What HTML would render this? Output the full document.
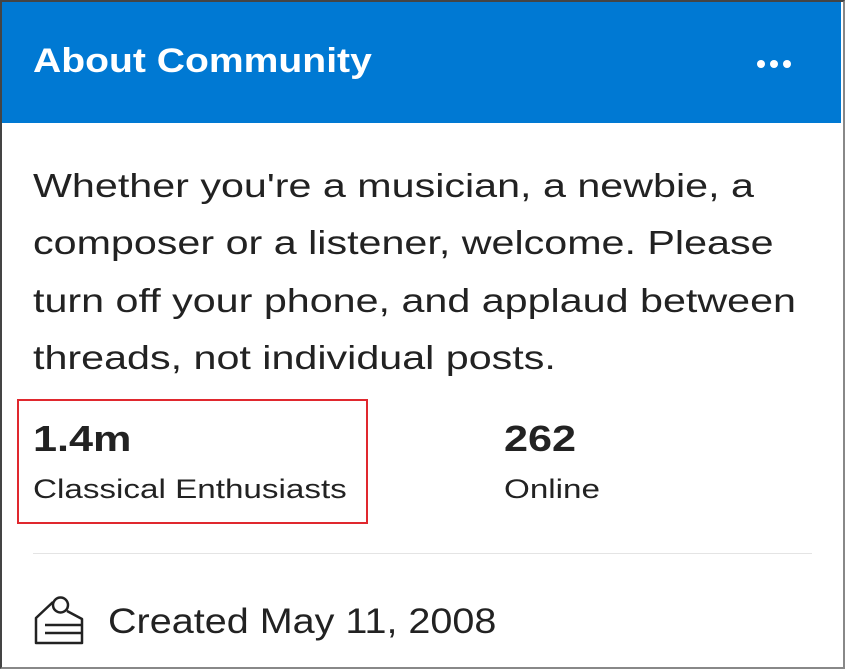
<!DOCTYPE html>
<html><head><style>
body{margin:0;width:845px;height:669px;background:#fff;font-family:"Liberation Sans",sans-serif;overflow:hidden}
.frame{position:absolute;left:0;top:0;width:841px;height:665px;border:2px solid #444;border-right-color:#888;border-bottom-color:#888}
.hdr{position:absolute;left:2px;top:2px;width:839px;height:121px;background:#0079d3}
.s{position:absolute;transform-origin:0 0;white-space:nowrap}
.t{left:33px;top:42px;color:#fff;font-weight:bold;font-size:34px;transform:scaleX(1.15)}
.dots{position:absolute;left:757px;top:55px}
.dots i{display:inline-block;width:8px;height:8px;border-radius:50%;background:#fff;margin-right:5px}
.desc{left:33px;top:157px;font-size:33px;line-height:57.3px;color:#222;transform:scaleX(1.25)}
.n{font-size:36px;font-weight:bold;color:#222;transform:scaleX(1.2)}
.l{font-size:27px;color:#222;transform:scaleX(1.23)}
.box{position:absolute;left:17px;top:399px;width:347px;height:121px;border:2px solid #e0282e}
.div{position:absolute;left:33px;top:553px;width:779px;height:1px;background:#e4e4e4}
.c{left:108px;top:602px;font-size:35px;color:#222;transform:scaleX(1.13)}
</style></head><body>
<div class="frame"></div>
<div class="hdr"></div>
<div class="s t">About Community</div>
<div class="dots"><i></i><i></i><i></i></div>
<div class="s desc">Whether you're a musician, a newbie, a<br>composer or a listener, welcome. Please<br>turn off your phone, and applaud between<br>threads, not individual posts.</div>
<div class="s n" style="left:33px;top:418px">1.4m</div>
<div class="s l" style="left:33px;top:474px">Classical Enthusiasts</div>
<div class="s n" style="left:504px;top:418px">262</div>
<div class="s l" style="left:504px;top:474px">Online</div>
<div class="box"></div>
<div class="div"></div>
<svg style="position:absolute;left:33px;top:594px" width="52" height="52" viewBox="0 0 52 52" fill="none" stroke="#222" stroke-width="2.5" stroke-linejoin="round">
<path d="M20 8 L3 24 L3 49 L49 49 L49 25 L34 17"/>
<circle cx="27.5" cy="11" r="7.5"/>
<path d="M12 31 H49 M12 39 H49"/>
</svg>
<div class="s c">Created May 11, 2008</div>
</body></html>
